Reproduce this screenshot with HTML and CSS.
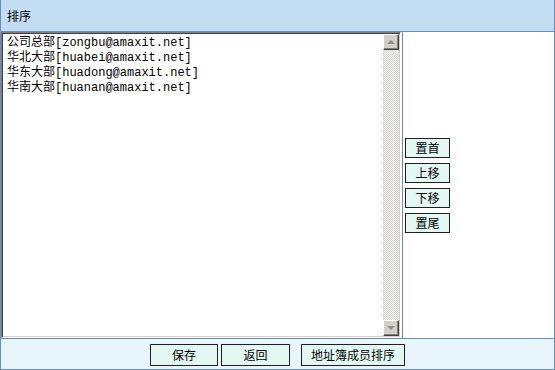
FILE: index.html
```html
<!DOCTYPE html>
<html lang="zh-CN">

<head>
    <meta charset="UTF-8">
    <title>排序</title>
    <link rel="stylesheet" href="styles.css">
</head>

<body>
    <div class="frame">
        <div class="title">排序</div>
        <div class="main">
            <div class="list-cell">
                <div class="listbox">
                    <div class="items">
                        <div>公司总部[zongbu@amaxit.net]</div>
                        <div>华北大部[huabei@amaxit.net]</div>
                        <div>华东大部[huadong@amaxit.net]</div>
                        <div>华南大部[huanan@amaxit.net]</div>
                    </div>
                    <div class="scrollbar">
                        <div class="sb-btn"><span class="arrow up"></span></div>
                        <div class="sb-track"></div>
                        <div class="sb-btn"><span class="arrow down"></span></div>
                    </div>
                </div>
            </div>
            <div class="side-cell">
                <button class="btn side">置首</button>
                <button class="btn side">上移</button>
                <button class="btn side">下移</button>
                <button class="btn side">置尾</button>
            </div>
        </div>
        <div class="footer">
            <button class="btn save">保存</button>
            <button class="btn back">返回</button>
            <button class="btn sort">地址簿成员排序</button>
        </div>
    </div>
</body>

</html>
```

FILE: styles.css
```css
* {
    box-sizing: border-box;
}

body {
    margin: 0;
    font-family: "Noto Sans CJK SC", "Liberation Sans", sans-serif;
    font-size: 12px;
    color: #000;
    background: #fff;
}

.frame {
    width: 555px;
    height: 370px;
    border: 1px solid #6a8bb8;
    border-top: none;
    display: flex;
    flex-direction: column;
}

.title {
    height: 32px;
    background-color: #c3ddf2;
    border-bottom: 1px solid #6a8bb8;
    padding-left: 6px;
    line-height: 31px;
}

.main {
    height: 306px;
    display: flex;
}

.list-cell {
    width: 402px;
    border-right: 1px solid #6a8bb8;
    padding-right: 1px;
}

.listbox {
    height: 306px;
    display: flex;
    border-top: 1px solid #808080;
    border-left: 1px solid #808080;
    border-right: 1px solid #fff;
    border-bottom: 1px solid #fff;
    box-shadow: inset 1px 1px 0 #404040, inset -1px -1px 0 #d4d0c8;
    padding: 1px 1px 1px 1px;
}

.items {
    flex: 1;
    padding: 2px 0 0 4px;
    font-family: "Liberation Mono", "Noto Sans CJK SC", monospace;
    font-size: 12px;
    line-height: 15px;
}

.scrollbar {
    width: 16px;
    display: flex;
    flex-direction: column;
}

.sb-btn {
    height: 16px;
    background-color: #d4d0c8;
    border-top: 1px solid #fff;
    border-left: 1px solid #fff;
    border-right: 1px solid #404040;
    border-bottom: 1px solid #404040;
    box-shadow: inset -1px -1px 0 #808080;
    display: flex;
    align-items: center;
    justify-content: center;
}

.arrow {
    width: 0;
    height: 0;
    border-left: 4px solid transparent;
    border-right: 4px solid transparent;
}

.arrow.up {
    border-bottom: 4px solid #8e8e8e;
}

.arrow.down {
    border-top: 4px solid #8e8e8e;
}

.sb-track {
    flex: 1;
    background-color: #fff;
    background-image: conic-gradient(#d4d0c8 25%, #fff 25% 50%, #d4d0c8 50% 75%, #fff 75%);
    background-size: 2px 2px;
}

.side-cell {
    flex: 1;
    display: flex;
    flex-direction: column;
    justify-content: center;
    align-items: flex-start;
    gap: 5px;
    padding-left: 2px;
}

.btn {
    font-family: "Noto Sans CJK SC", "Liberation Sans", sans-serif;
    font-size: 12px;
    color: #000;
    background-color: #e4f8f3;
    border: 1px solid #1e1e1e;
    padding: 0;
    margin: 0;
    line-height: 16px;
}

.side {
    width: 45px;
    height: 20px;
}

.footer {
    flex: 1;
    background-color: #e8f5fd;
    border-top: 1px solid #6a8bb8;
    display: flex;
    justify-content: center;
    align-items: center;
    padding-top: 1px;
}

.save {
    width: 68px;
    height: 22px;
}

.back {
    width: 69px;
    height: 22px;
    margin-left: 3px;
}

.sort {
    width: 104px;
    height: 22px;
    margin-left: 11px;
}
```
